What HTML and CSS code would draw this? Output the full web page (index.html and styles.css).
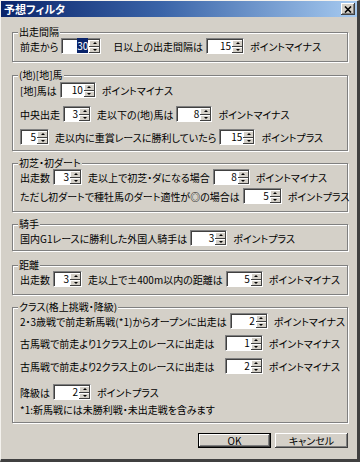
FILE: index.html
```html
<!DOCTYPE html>
<html lang="ja">
<head>
  <meta charset="UTF-8">
  <title>予想フィルタ</title>
  <link rel="stylesheet" href="styles.css">
</head>
<body>

<div class="window">
  <div class="titlebar">
    <span class="title">予想フィルタ</span>
    <span class="close">
      <svg viewBox="0 0 8 7" width="8" height="7">
        <path d="M1 0.5L7 6.5M7 0.5L1 6.5" stroke="#000" stroke-width="1.6"/>
      </svg>
    </span>
  </div>

  <div class="body">
    <fieldset class="group">
      <legend>出走間隔</legend>
      <div class="row">
        <span>前走から</span>
        <span class="spin w40"><span class="val"><b class="sel">30</b></span><span class="arrows"><i class="up"></i><i class="dn"></i></span></span>
        <span class="gap">日以上の出走間隔は</span>
        <span class="spin w38"><span class="val">15</span><span class="arrows"><i class="up"></i><i class="dn"></i></span></span>
        <span>ポイントマイナス</span>
      </div>
    </fieldset>

    <fieldset class="group group-local">
      <legend>(地)[地]馬</legend>
      <div class="row">
        <span>[地]馬は</span>
        <span class="spin w36"><span class="val">10</span><span class="arrows"><i class="up"></i><i class="dn"></i></span></span>
        <span>ポイントマイナス</span>
      </div>
      <div class="row mt8">
        <span>中央出走</span>
        <span class="spin w28"><span class="val">3</span><span class="arrows"><i class="up"></i><i class="dn"></i></span></span>
        <span>走以下の(地)馬は</span>
        <span class="spin w36"><span class="val">8</span><span class="arrows"><i class="up"></i><i class="dn"></i></span></span>
        <span>ポイントマイナス</span>
      </div>
      <div class="row mt7">
        <span class="spin w29 first"><span class="val">5</span><span class="arrows"><i class="up"></i><i class="dn"></i></span></span>
        <span>走以内に重賞レースに勝利していたら</span>
        <span class="spin w36"><span class="val">15</span><span class="arrows"><i class="up"></i><i class="dn"></i></span></span>
        <span>ポイントプラス</span>
      </div>
    </fieldset>

    <fieldset class="group">
      <legend>初芝・初ダート</legend>
      <div class="row">
        <span>出走数</span>
        <span class="spin w29"><span class="val">3</span><span class="arrows"><i class="up"></i><i class="dn"></i></span></span>
        <span>走以上で初芝・ダになる場合</span>
        <span class="spin w37"><span class="val">8</span><span class="arrows"><i class="up"></i><i class="dn"></i></span></span>
        <span>ポイントマイナス</span>
      </div>
      <div class="row mt3">
        <span>ただし初ダートで種牡馬のダート適性が◎の場合は</span>
        <span class="spin w39"><span class="val">5</span><span class="arrows"><i class="up"></i><i class="dn"></i></span></span>
        <span>ポイントプラス</span>
      </div>
    </fieldset>

    <fieldset class="group group-jockey">
      <legend>騎手</legend>
      <div class="row">
        <span>国内G1レースに勝利した外国人騎手は</span>
        <span class="spin w37"><span class="val">3</span><span class="arrows"><i class="up"></i><i class="dn"></i></span></span>
        <span>ポイントプラス</span>
      </div>
    </fieldset>

    <fieldset class="group group-distance">
      <legend>距離</legend>
      <div class="row">
        <span>出走数</span>
        <span class="spin w29"><span class="val">3</span><span class="arrows"><i class="up"></i><i class="dn"></i></span></span>
        <span>走以上で±400m以内の距離は</span>
        <span class="spin w37"><span class="val">5</span><span class="arrows"><i class="up"></i><i class="dn"></i></span></span>
        <span>ポイントマイナス</span>
      </div>
    </fieldset>

    <fieldset class="group group-class">
      <legend>クラス(格上挑戦・降級)</legend>
      <div class="row">
        <span class="label">2・3歳戦で前走新馬戦(*1)からオープンに出走は</span>
        <span class="spin w38"><span class="val">2</span><span class="arrows"><i class="up"></i><i class="dn"></i></span></span>
        <span>ポイントマイナス</span>
      </div>
      <div class="row mt6">
        <span class="label">古馬戦で前走より1クラス上のレースに出走は</span>
        <span class="spin w38"><span class="val">1</span><span class="arrows"><i class="up"></i><i class="dn"></i></span></span>
        <span>ポイントマイナス</span>
      </div>
      <div class="row mt7">
        <span class="label">古馬戦で前走より2クラス上のレースに出走は</span>
        <span class="spin w38"><span class="val">2</span><span class="arrows"><i class="up"></i><i class="dn"></i></span></span>
        <span>ポイントマイナス</span>
      </div>
      <div class="row mt10">
        <span>降級は</span>
        <span class="spin w38"><span class="val">2</span><span class="arrows"><i class="up"></i><i class="dn"></i></span></span>
        <span>ポイントプラス</span>
      </div>
      <div class="note">*1:新馬戦には未勝利戦・未出走戦を含みます</div>
    </fieldset>

    <div class="buttons">
      <button class="btn default">OK</button>
      <button class="btn">キャンセル</button>
    </div>
  </div>
</div>

</body>
</html>
```

FILE: styles.css
```css
body {
  margin: 0;
  background: #d4d0c8;
  font-family: "Noto Sans CJK JP", "Liberation Sans", sans-serif;
  font-size: 10px;
  font-feature-settings: "palt";
  color: #000;
}

.window {
  width: 360px;
  height: 462px;
  box-sizing: border-box;
  border-style: solid;
  border-width: 1px 3px 3px 1px;
  border-color: #f4f2ee #404040 #404040 #f4f2ee;
  background: #d4d0c8;
}

.titlebar {
  height: 16px;
  display: flex;
  align-items: center;
  justify-content: space-between;
  padding: 0 2px 0 3px;
  background: linear-gradient(to right, #0a246a, #3a64a8 45%, #a6caf0);
}

.title {
  color: #fff;
  font-size: 11px;
  font-weight: bold;
  line-height: 16px;
}

.close {
  width: 14px;
  height: 12px;
  display: flex;
  align-items: center;
  justify-content: center;
  background: #d4d0c8;
  box-shadow: inset -1px -1px #404040, inset 1px 1px #fff, inset -2px -2px #808080;
}

.body {
  padding: 9px 9px 0 11px;
  display: flex;
  flex-direction: column;
  gap: 6px;
}

/* group boxes */
.group {
  margin: 0;
  padding: 0 7px 7px;
  min-width: 0;
  border: 1px solid #808080;
  box-shadow: inset 1px 1px #fff, 1px 1px #fff;
}

.group-local {
  margin-top: 1px;
  padding-top: 1px;
  padding-bottom: 5px;
}

.group-jockey {
  padding-bottom: 4px;
}

.group-distance {
  margin-top: 2px;
}

.group-class {
  padding-bottom: 6px;
}

.group legend {
  padding: 0 1px;
  margin-left: -2px;
  line-height: 12px;
  background: #d4d0c8;
}

.row {
  display: flex;
  align-items: center;
  height: 16px;
  white-space: nowrap;
}

.mt3 { margin-top: 3px; }
.mt6 { margin-top: 6px; }
.mt7 { margin-top: 7px; }
.mt8 { margin-top: 8px; }
.mt10 { margin-top: 10px; }

.label {
  width: 207px;
}

.note {
  margin-top: 4px;
  line-height: 12px;
  white-space: nowrap;
}

/* spin edit */
.spin {
  flex: none;
  display: flex;
  height: 16px;
  box-sizing: border-box;
  margin: 0 6px 0 3px;
  border: 1px solid;
  border-color: #808080 #fff #fff #808080;
  background: #fff;
  box-shadow: inset 1px 1px #404040;
}

.spin.first {
  margin-left: 0;
}

.gap {
  margin-left: 6px;
}

.w28 { width: 28px; }
.w29 { width: 29px; }
.w36 { width: 36px; }
.w37 { width: 37px; }
.w38 { width: 38px; }
.w39 { width: 39px; }
.w40 { width: 40px; }

.val {
  flex: 1;
  text-align: right;
  line-height: 14px;
  padding-right: 1px;
}

.sel {
  font-weight: normal;
  color: #fff;
  background: #0a246a;
}

.arrows {
  width: 11px;
  display: flex;
  flex-direction: column;
  padding-top: 1px;
}

.arrows i {
  flex: 1;
  display: flex;
  align-items: center;
  justify-content: center;
  background: #d4d0c8;
  box-shadow: inset -1px -1px #404040, inset 1px 1px #fff;
}

.arrows .up::after {
  content: "";
  border-left: 2px solid transparent;
  border-right: 2px solid transparent;
  border-bottom: 2px solid #000;
}

.arrows .dn::after {
  content: "";
  border-left: 2px solid transparent;
  border-right: 2px solid transparent;
  border-top: 2px solid #000;
}

/* dialog buttons */
.buttons {
  display: flex;
  justify-content: flex-end;
  gap: 4px;
  margin-top: 4px;
}

.btn {
  width: 73px;
  height: 15px;
  padding: 0;
  box-sizing: border-box;
  border: none;
  font-family: inherit;
  font-size: 10px;
  line-height: 13px;
  font-feature-settings: "palt";
  color: #000;
  background: #d4d0c8;
  box-shadow: inset -1px -1px #404040, inset 1px 1px #fff, inset -2px -2px #808080;
}

.btn.default {
  border: 1px solid #000;
}
```
